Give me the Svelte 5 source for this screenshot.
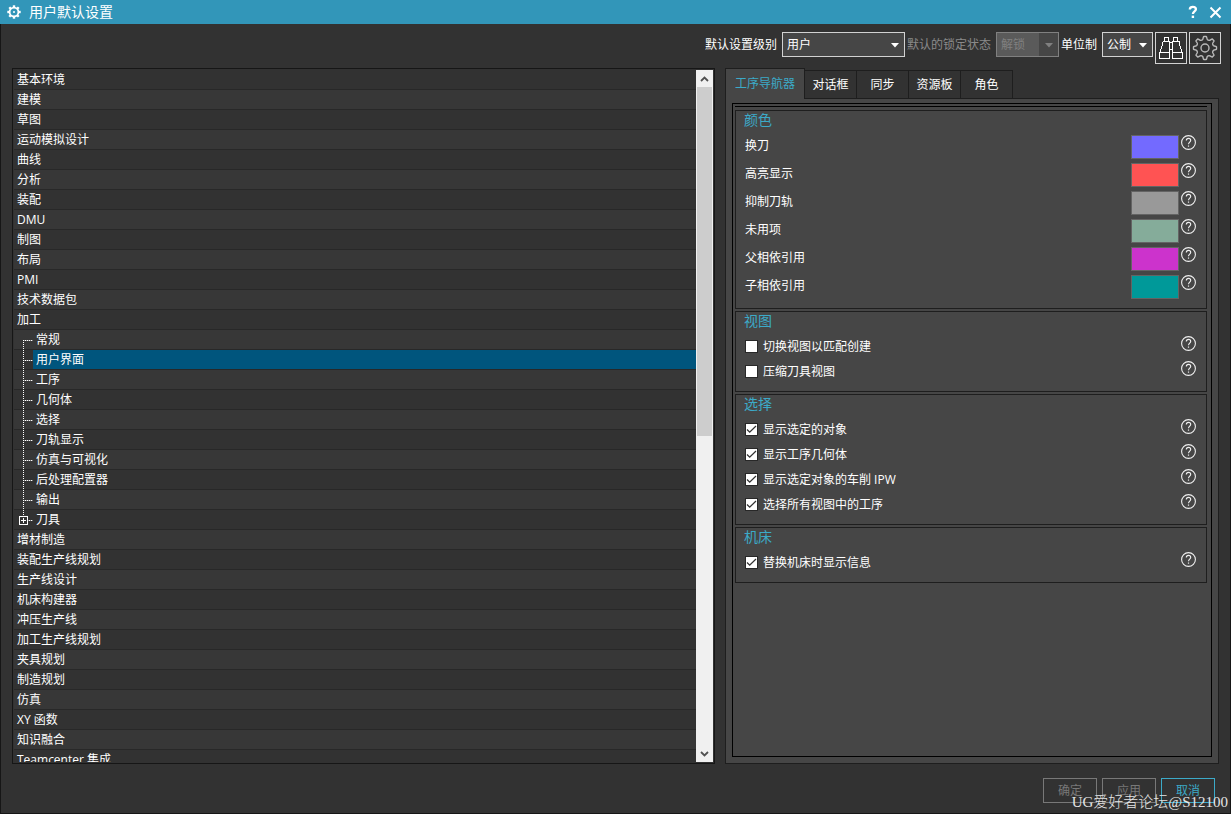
<script>
  const before = ['基本环境', '建模', '草图', '运动模拟设计', '曲线', '分析', '装配', 'DMU', '制图', '布局', 'PMI', '技术数据包', '加工'];
  const children = ['常规', '用户界面', '工序', '几何体', '选择', '刀轨显示', '仿真与可视化', '后处理配置器', '输出', '刀具'];
  const after = ['增材制造', '装配生产线规划', '生产线设计', '机床构建器', '冲压生产线', '加工生产线规划', '夹具规划', '制造规划', '仿真', 'XY 函数', '知识融合', 'Teamcenter 集成'];
  const rows = [
    ...before.map((label) => ({ label, child: false })),
    ...children.map((label, i) => ({ label, child: true, first: i === 0, expandable: i === children.length - 1 })),
    ...after.map((label) => ({ label, child: false }))
  ];
  let selected = $state('用户界面');

  const tabs = ['工序导航器', '对话框', '同步', '资源板', '角色'];
  let activeTab = $state('工序导航器');

  const colors = [
    { label: '换刀', value: '#736aff' },
    { label: '高亮显示', value: '#ff5353' },
    { label: '抑制刀轨', value: '#999999' },
    { label: '未用项', value: '#85ac9a' },
    { label: '父相依引用', value: '#cc33cc' },
    { label: '子相依引用', value: '#009999' }
  ];

  const groups = $state([
    { title: '视图', items: [
      { label: '切换视图以匹配创建', checked: false },
      { label: '压缩刀具视图', checked: false }
    ] },
    { title: '选择', items: [
      { label: '显示选定的对象', checked: true },
      { label: '显示工序几何体', checked: true },
      { label: '显示选定对象的车削 IPW', checked: true },
      { label: '选择所有视图中的工序', checked: true }
    ] },
    { title: '机床', items: [
      { label: '替换机床时显示信息', checked: true }
    ] }
  ]);
</script>

{#snippet help()}
  <button class="help" aria-label="帮助">
    <svg width="15" height="15" viewBox="0 0 15 15" fill="none" stroke="#f0f0f0">
      <circle cx="7.5" cy="7.5" r="6.9" stroke-width="1.1" />
      <path d="M5.3 5.6C5.3 4.3 6.1 3.4 7.5 3.4s2.2.9 2.2 2c0 1.6-2.2 1.8-2.2 3.8" stroke-width="1.1" />
      <path d="M7.5 10.5v1.2" stroke-width="1.2" />
    </svg>
  </button>
{/snippet}

{#snippet arrow()}
  <svg class="arrow" width="9" height="5" viewBox="0 0 9 5"><path d="M0 0h8L4 4.5z" fill="currentColor" /></svg>
{/snippet}

<div class="window">
  <header class="titlebar">
    <svg width="14" height="14" viewBox="-7 -7 14 14" fill="none" stroke="#fff">
      <circle r="4.4" stroke-width="1.8" />
      <circle r="1" fill="#fff" stroke="none" />
      <g stroke-width="2.4">
        {#each [0, 45, 90, 135, 180, 225, 270, 315] as a}
          <path d="M0 -4.6V-6.7" transform="rotate({a})" />
        {/each}
      </g>
    </svg>
    <h1>用户默认设置</h1>
    <button class="plain" aria-label="帮助">
      <svg width="10" height="14" viewBox="0 0 10 14" fill="none" stroke="#fff"><path d="M1.8 4.6C1.8 2.6 3 1.9 4.8 1.9s3.1.8 3.1 2.4C7.9 6.4 4.9 6.5 4.9 9" stroke-width="2.3" /><path d="M4.9 10.6v2.4" stroke-width="2.4" /></svg>
    </button>
    <button class="plain" aria-label="关闭">
      <svg width="13" height="13" viewBox="0 0 13 13" stroke="#fff" stroke-width="2"><path d="M1.5 1.5l10 10M11.5 1.5l-10 10" /></svg>
    </button>
  </header>

  <div class="toolbar">
    <label for="level">默认设置级别</label>
    <div class="select wide">
      <select id="level"><option>用户</option></select>
      {@render arrow()}
    </div>
    <label for="lock" class="muted">默认的锁定状态</label>
    <div class="select mid muted">
      <select id="lock" disabled><option>解锁</option></select>
      {@render arrow()}
    </div>
    <label for="unit">单位制</label>
    <div class="select small">
      <select id="unit"><option>公制</option></select>
      {@render arrow()}
    </div>
    <button class="tool" aria-label="查找">
      <svg width="26" height="26" viewBox="0 0 26 26" fill="none" stroke="#fff" shape-rendering="crispEdges">
        <path d="M6.5 6.5V2.5h4v4M15.5 6.5V2.5h4v4" />
        <path d="M4.5 6.5h7v11M4.5 6.5v4l-1 1v2l-1 1v2l-1 1v6h10v-6M21.5 6.5h-7v11M21.5 6.5v4l1 1v2l1 1v2l1 1v6h-10v-6M1.5 17.5h10M14.5 17.5h10M11.5 7.5h3M11.5 14.5h3" />
      </svg>
    </button>
    <button class="tool" aria-label="设置">
      <svg width="26" height="26" viewBox="-13 -13 26 26" fill="none" stroke="#b9b9b9" stroke-width="1.4" stroke-linejoin="round">
        <circle r="4" />
        <path d="M-2.6 -8.2C-1.6 -8.8 -2 -11.5 -1.2 -11.5H1.2C2 -11.5 1.6 -8.8 2.6 -8.2L4 -7.6C5.1 -7.3 6.5 -9.3 7.3 -9L9 -7.3C9.3 -6.5 7.3 -5.1 7.6 -4L8.2 -2.6C8.8 -1.6 11.5 -2 11.5 -1.2V1.2C11.5 2 8.8 1.6 8.2 2.6L7.6 4C7.3 5.1 9.3 6.5 9 7.3L7.3 9C6.5 9.3 5.1 7.3 4 7.6L2.6 8.2C1.6 8.8 2 11.5 1.2 11.5H-1.2C-2 11.5 -1.6 8.8 -2.6 8.2L-4 7.6C-5.1 7.3 -6.5 9.3 -7.3 9L-9 7.3C-9.3 6.5 -7.3 5.1 -7.6 4L-8.2 2.6C-8.8 1.6 -11.5 2 -11.5 1.2V-1.2C-11.5 -2 -8.8 -1.6 -8.2 -2.6L-7.6 -4C-7.3 -5.1 -9.3 -6.5 -9 -7.3L-7.3 -9C-6.5 -9.3 -5.1 -7.3 -4 -7.6Z" />
      </svg>
    </button>
  </div>

  <main>
    <nav class="tree">
      <ul>
        {#each rows as row}
          <li>
            {#if row.child}
              <svg class="branch" width="19" height="20" viewBox="0 0 19 20" fill="#fff" shape-rendering="crispEdges">
                {#if row.expandable}
                  {#each [0, 2, 4] as y}<rect x="9" {y} width="1" height="1" />{/each}
                  {#each [15, 17] as x}<rect {x} y="10" width="1" height="1" />{/each}
                  <path d="M14 10h5v1h-5z" fill-opacity=".35" />
                  <rect x="5.5" y="6.5" width="8" height="8" fill="none" stroke="#fff" />
                  <path d="M7 10h5v1H7zM9 8h1v5H9z" />
                {:else}
                  {#each [0, 2, 4, 6, 8, 10, 12, 14, 16, 18] as y}
                    {#if !row.first || y >= 10}<rect x="9" {y} width="1" height="1" />{/if}
                  {/each}
                  {#each [11, 13, 15, 17] as x}<rect {x} y="10" width="1" height="1" />{/each}
                  <path d="M10 10h9v1h-9z" fill-opacity=".35" />
                {/if}
              </svg>
            {/if}
            <button class:selected={selected === row.label && row.child} onclick={() => (selected = row.label)}>{row.label}</button>
          </li>
        {/each}
      </ul>
      <div class="scroll">
        <button aria-label="向上"><svg width="9" height="6" viewBox="0 0 9 6" fill="none" stroke="#505050" stroke-width="1.8"><path d="M1 5l3.5-3.5L8 5" /></svg></button>
        <div class="track"><div class="thumb"></div></div>
        <button aria-label="向下"><svg width="9" height="6" viewBox="0 0 9 6" fill="none" stroke="#505050" stroke-width="1.8"><path d="M1 1l3.5 3.5L8 1" /></svg></button>
      </div>
    </nav>

    <section class="side">
      <div class="tabs" role="tablist">
        {#each tabs as tab}
          <button role="tab" aria-selected={activeTab === tab} class:active={activeTab === tab} onclick={() => (activeTab = tab)}>{tab}</button>
        {/each}
      </div>
      <div class="panel">
        <div class="frame">
          <hr />
          <section class="group">
            <h2>颜色</h2>
            {#each colors as c}
              <div class="row color">
                <span class="text">{c.label}</span>
                <button class="swatch" aria-label={c.label} style="background:{c.value}"></button>
                {@render help()}
              </div>
            {/each}
          </section>
          {#each groups as g}
            <section class="group">
              <h2>{g.title}</h2>
              {#each g.items as item}
                <div class="row">
                  <label class="text"><input type="checkbox" bind:checked={item.checked} />{item.label}</label>
                  {@render help()}
                </div>
              {/each}
            </section>
          {/each}
        </div>
      </div>
    </section>
  </main>

  <footer>
    <button disabled>确定</button>
    <button disabled>应用</button>
    <button class="primary">取消</button>
    <span class="mark">UG爱好者论坛@S12100</span>
  </footer>
</div>

<style>
  :global(body) { background: #323232; }
  * { box-sizing: border-box; }
  .window {
    display: flex;
    flex-direction: column;
    height: 100vh;
    overflow: hidden;
    background: #323232;
    color: #fff;
    font: 12px/18px "Open Sans", "Noto Sans CJK SC", sans-serif;
  }
  button, select { font: inherit; color: inherit; padding: 0; margin: 0; border-radius: 0; }
  h1, h2, ul, hr { margin: 0; padding: 0; font-weight: 400; }

  .titlebar {
    flex: none;
    display: flex;
    align-items: center;
    height: 24px;
    padding: 0 9px 0 7px;
    background: #3296b9;
  }
  h1 { flex: 1; margin-left: 8px; font-size: 14px; line-height: 24px; }
  .plain { display: flex; margin-left: 11px; border: 0; background: none; }

  .toolbar {
    flex: none;
    display: flex;
    justify-content: flex-end;
    gap: 2px;
    padding: 8px 9px 4px;
    border: solid #161616;
    border-width: 0 1px;
  }
  .toolbar label { line-height: 26px; margin-right: 3px; }
  .toolbar label.muted { color: #8a8a8a; }
  .select { position: relative; height: 25px; }
  .wide { width: 123px; }
  .mid { width: 63px; }
  .small { width: 51px; }
  select {
    appearance: none;
    width: 100%;
    height: 100%;
    padding: 0 4px;
    border: 1px solid #d2d2d2;
    background: #464646;
    line-height: 22px;
  }
  .select.muted { color: #808080; }
  .muted select { opacity: 1; border-color: #808080; background: linear-gradient(90deg, #5a5a5a 42px, #464646 42px); }
  .arrow { position: absolute; right: 5px; top: 11px; pointer-events: none; }
  .tool {
    display: grid;
    place-items: center;
    width: 32px;
    height: 32px;
    border: 1px solid #d2d2d2;
    background: #323232;
  }

  main {
    flex: 1;
    min-height: 0;
    display: grid;
    grid-template-columns: 703fr 494fr;
    grid-template-rows: minmax(0, 1fr);
    gap: 10px;
    padding: 0 11px;
    border: solid #161616;
    border-width: 0 1px;
  }
  .tree { display: flex; padding: 1px; border: 1px solid #161616; }
  ul { flex: 1; overflow: hidden; list-style: none; }
  li { display: flex; height: 20px; background: #323232; border-bottom: 1px solid #282828; }
  li:nth-child(even) { background: #373737; }
  li button { flex: 1; border: 0; padding: 0 3px; background: none; text-align: left; line-height: 19px; }
  li button.selected { background: #00557d; }
  .branch { flex: none; }
  .scroll { display: flex; flex-direction: column; width: 17px; background: #f0f0f0; }
  .scroll button { display: grid; place-items: center; height: 17px; border: 0; background: #f0f0f0; }
  .track { flex: 1; padding: 0 1px; }
  .thumb { height: 53%; background: #cdcdcd; }

  .side { display: flex; flex-direction: column; min-width: 0; }
  .tabs { display: flex; align-items: flex-end; height: 31px; margin-bottom: -1px; position: relative; }
  .tabs button {
    min-width: 52px;
    height: 29px;
    padding: 0 7px;
    border: 1px solid #1e1e1e;
    border-left-width: 0;
    background: #323232;
    line-height: 26px;
  }
  .tabs button.active {
    height: 31px;
    padding: 0 9px;
    border-width: 1px 1px 0;
    background: #464646;
    color: #3caac8;
    line-height: 28px;
  }
  .panel { flex: 1; display: flex; min-height: 0; padding: 4px 6px 6px; border: 1px solid #1e1e1e; background: #464646; }
  .frame { flex: 1; display: flex; flex-direction: column; gap: 2px; padding: 2px 4px 2px 2px; border: 1px solid #000; overflow: hidden; }
  hr { flex: none; height: 1px; border: 0; margin-bottom: 1px; background: #000; }
  .group { flex: none; padding: 0 10px 7px 9px; border: 1px solid #1e1e1e; }
  h2 { height: 22px; margin-left: -1px; font-size: 14px; line-height: 18px; color: #3caac8; }
  .row { display: flex; align-items: flex-start; gap: 2px; height: 25px; padding-top: 2px; }
  .row.color { height: 28px; }
  .text { flex: 1; display: flex; align-items: center; gap: 5px; line-height: 21px; }
  .swatch { width: 48px; height: 24px; border: 1px solid #646464; }
  .help { display: flex; border: 0; background: none; }
  input {
    appearance: none;
    width: 13px;
    height: 13px;
    margin: 0;
    border: 1px solid #282828;
    background: #fff;
  }
  input:checked {
    background: #fff url("data:image/svg+xml,%3Csvg xmlns='http://www.w3.org/2000/svg' viewBox='0 0 11 11'%3E%3Cpath d='M1 5.5l2.700 2.700L10 2' fill='none' stroke='%23333' stroke-width='1.3'/%3E%3C/svg%3E");
  }

  footer {
    flex: none;
    position: relative;
    display: flex;
    justify-content: flex-end;
    gap: 5px;
    padding: 14px 15px 10px;
    border: solid #161616;
    border-width: 0 1px 1px;
  }
  footer button { width: 54px; height: 25px; border: 1px solid #787878; background: #323232; color: #787878; }
  footer button.primary { border-color: #3caac8; color: #3caac8; }
  .mark {
    position: absolute;
    right: 2px;
    bottom: 1px;
    font: 300 15px/20px "Liberation Serif", "Noto Sans CJK SC", serif;
    color: #e6e6e6;
  }
</style>
